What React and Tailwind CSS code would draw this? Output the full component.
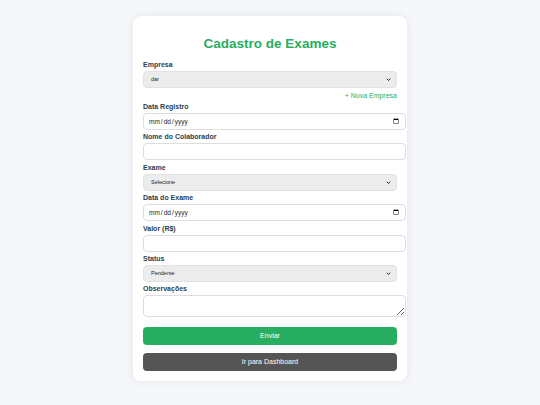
import React from 'react';

const Label = ({ children }) => (
  <label className="block text-[7px] font-bold text-[#2c3e50] mb-[2px] leading-[8px]">{children}</label>
);

const Select = ({ value }) => (
  <div className="relative w-[254px]">
    <select
      defaultValue={value}
      className="block w-[254px] h-[17px] appearance-none rounded-[4px] border border-[#e2e2e2] bg-[#ececec] px-[7px] text-[5.5px] text-[#222] outline-none"
    >
      <option>{value}</option>
    </select>
    <svg className="pointer-events-none absolute right-[6px] top-[6px]" width="5" height="5" viewBox="0 0 10 10">
      <path d="M1.5 3.5 L5 7 L8.5 3.5" fill="none" stroke="#222" strokeWidth="2" />
    </svg>
  </div>
);

const Input = ({ type = 'text' }) => (
  <input
    type={type}
    className="block w-[263px] h-[17px] rounded-[4px] border border-[#ddd] bg-white px-[4px] text-[6.5px] text-[#222] outline-none"
  />
);

const Field = ({ label, children }) => (
  <div className="mb-[3.4px]">
    <Label>{label}</Label>
    {children}
  </div>
);

export default function App() {
  return (
    <div className="min-h-[405px] w-[540px] bg-[#f5f7fa] pt-[16px] font-['Liberation_Sans',Arial,sans-serif]">
      <div className="ml-[133px] w-[274px] rounded-[8px] bg-white px-[10px] pt-[18px] pb-[10px] shadow-[0_0_8px_rgba(0,0,0,0.08)]">
        <h1 className="text-center text-[13.5px] font-bold text-[#27ae60] leading-[20px] mb-[7px]">Cadastro de Exames</h1>

        <div>
          <Label>Empresa</Label>
          <Select value="dar" />
        </div>
        <div className="w-[254px] mt-[3px] mb-[2px] text-right text-[7px] text-[#27ae60] leading-[10px]">+ Nova Empresa</div>

        <Field label="Data Registro"><Input type="date" /></Field>
        <Field label="Nome do Colaborador"><Input /></Field>
        <Field label="Exame"><Select value="Selecione" /></Field>
        <Field label="Data do Exame"><Input type="date" /></Field>
        <Field label="Valor (R$)"><Input /></Field>
        <Field label="Status"><Select value="Pendente" /></Field>
        <div className="mb-[10px]">
          <Label>Observações</Label>
          <textarea className="block w-[263px] h-[22px] rounded-[4px] border border-[#ddd] bg-white px-[4px] text-[7px] outline-none" />
        </div>

        <button className="block w-[254px] h-[18px] rounded-[4px] bg-[#27ae60] text-[7px] text-white mb-[8px]">Enviar</button>
        <button className="block w-[254px] h-[18px] rounded-[4px] bg-[#555] text-[7px] text-white">Ir para Dashboard</button>
      </div>
    </div>
  );
}
